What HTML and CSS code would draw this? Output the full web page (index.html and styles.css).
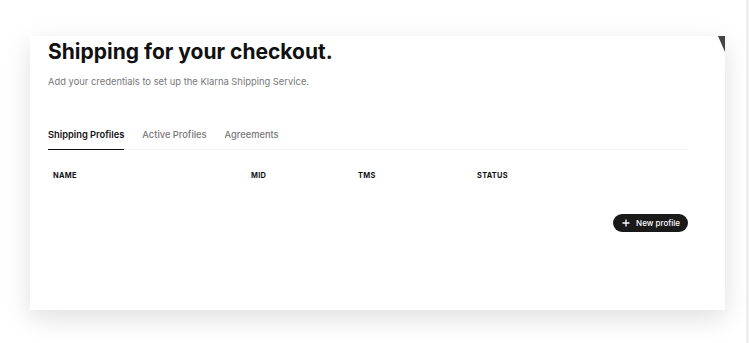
FILE: index.html
```html
<!DOCTYPE html>
<html lang="en">
<head>
    <meta charset="UTF-8">
    <meta name="viewport" content="width=device-width, initial-scale=1.0">
    <title>Shipping Service</title>
    <link rel="stylesheet" href="styles.css">
</head>
<body>
    <div class="page">
        <div class="card">
            <span class="corner"></span>
            <h1 class="title">Shipping for your checkout.</h1>
            <p class="subtitle">Add your credentials to set up the Klarna Shipping Service.</p>

            <div class="tabs">
                <div class="tab active">Shipping Profiles</div>
                <div class="tab">Active Profiles</div>
                <div class="tab">Agreements</div>
            </div>

            <div class="table-head">
                <div class="col col-name">NAME</div>
                <div class="col col-mid">MID</div>
                <div class="col col-tms">TMS</div>
                <div class="col col-status">STATUS</div>
            </div>

            <div class="actions">
                <button class="btn-new">
                    <svg width="8" height="8" viewBox="0 0 8 8">
                        <path d="M4 0.5V7.5M0.5 4H7.5" stroke="#fff" stroke-width="1.3"/>
                    </svg>
                    New profile
                </button>
            </div>
        </div>
    </div>
    <div class="scroll-track"></div>
</body>
</html>
```

FILE: styles.css
```css
html, body {
    margin: 0;
    padding: 0;
    height: 100%;
}
body {
    font-family: Inter, "Noto Sans", sans-serif;
    background: #fff;
    color: #111;
    display: flex;
    overflow: hidden;
}
.page {
    flex: 1;
    padding: 36px 0 0 30px;
}
.scroll-track {
    width: 3px;
    background: #f0f0f0;
}
.card {
    position: relative;
    width: 695px;
    height: 274px;
    box-sizing: border-box;
    background: #fff;
    padding: 0 37px 0 18px;
    box-shadow: 0 8px 24px rgba(0, 0, 0, 0.13);
}
.corner {
    position: absolute;
    top: 0;
    right: 0;
    width: 7px;
    height: 16px;
    background: #444;
    clip-path: polygon(0 0, 100% 0, 100% 100%);
}
.title {
    margin: 0;
    padding-top: 3px;
    font-size: 21px;
    line-height: 26px;
    font-weight: 700;
    letter-spacing: 0;
    color: #111;
}
.subtitle {
    margin: 11px 0 0;
    font-size: 9.4px;
    line-height: 12px;
    color: #777;
}
.tabs {
    display: flex;
    gap: 18px;
    margin-top: 41px;
    border-bottom: 1px solid #f3f3f3;
}
.tab {
    font-size: 9.3px;
    line-height: 12px;
    padding-bottom: 8px;
    color: #777;
    font-weight: 500;
}
.tab.active {
    color: #111;
    font-weight: 600;
    border-bottom: 1.5px solid #111;
    margin-bottom: -1px;
}
.table-head {
    display: flex;
    padding: 21px 0 0 5px;
    font-size: 7.4px;
    font-weight: 700;
    letter-spacing: 0.3px;
    line-height: 10px;
    color: #111;
}
.col-name { width: 198px; }
.col-mid { width: 107px; }
.col-tms { width: 119px; }
.actions {
    display: flex;
    justify-content: flex-end;
    margin-top: 33px;
}
.btn-new {
    display: flex;
    align-items: center;
    gap: 6px;
    height: 18px;
    padding: 0 8px 0 9px;
    border: none;
    border-radius: 9px;
    background: #1a1a1a;
    color: #fff;
    font-family: Inter, "Noto Sans", sans-serif;
    font-size: 8px;
    font-weight: 500;
}
```
